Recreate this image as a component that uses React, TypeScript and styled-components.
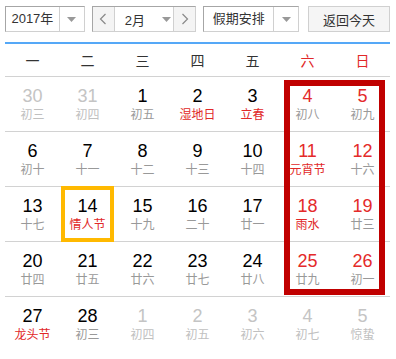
import React from "react";
import styled, { createGlobalStyle } from "styled-components";

const Global = createGlobalStyle`
  html, body { margin: 0; padding: 0; background: #fff; }
  body { font-family: "Liberation Sans", "Noto Sans CJK SC", sans-serif; }
`;

const Page = styled.div`
  padding: 6px 0 0 5px;
  width: 385px;
`;

const Toolbar = styled.div`
  display: flex;
  height: 26px;
  font-family: "Liberation Sans", "Noto Sans CJK SC", sans-serif;
  font-size: 13px;
  color: #333;
`;

const Select = styled.div<{ $w: number; $ml?: number }>`
  display: flex;
  box-sizing: border-box;
  width: ${(p) => p.$w}px;
  margin-left: ${(p) => p.$ml ?? 0}px;
  height: 26px;
  border: 1px solid;
  border-color: #a6a6a6 #d0d0d0 #d0d0d0 #a6a6a6;
  background: #fff;
`;

const SelectText = styled.div`
  flex: 1;
  display: flex;
  align-items: center;
  justify-content: center;
  line-height: 24px;
`;

const Caret = styled.div`
  width: 24px;
  border-left: 1px solid #d0d0d0;
  display: flex;
  align-items: center;
  justify-content: center;
`;

const NavBtn = styled.div<{ $side: "l" | "r" }>`
  width: 21px;
  background: #f4f4f4;
  ${(p) => (p.$side === "l" ? "border-right" : "border-left")}: 1px solid #d0d0d0;
  display: flex;
  align-items: center;
  justify-content: center;
`;

const MonthText = styled.div`
  flex: 1;
  display: flex;
  align-items: center;
  padding-left: 10px;
  gap: 17px;
`;

const TodayBtn = styled.div`
  box-sizing: border-box;
  width: 82px;
  margin-left: 9px;
  height: 26px;
  border: 1px solid #d0d0d0;
  background: #f5f5f5;
  display: flex;
  align-items: center;
  justify-content: center;
`;

const Calendar = styled.div`
  margin-top: 10px;
  border-top: 2px solid #55a8f7;
  width: 385px;
`;

const Head = styled.div`
  display: grid;
  grid-template-columns: repeat(7, 55px);
  height: 32px;
  border-bottom: 1px solid #d2d2d2;
  font-family: "Noto Sans CJK SC", sans-serif;
  font-size: 14px;
`;

const HeadCell = styled.div<{ $weekend?: boolean }>`
  display: flex;
  align-items: center;
  justify-content: center;
  color: ${(p) => (p.$weekend ? "#e12828" : "#333")};
`;

const Body = styled.div`
  position: relative;
`;

const Row = styled.div<{ $last?: boolean }>`
  display: grid;
  grid-template-columns: repeat(7, 55px);
  height: 54px;
  border-bottom: ${(p) => (p.$last ? "none" : "1px solid #d2d2d2")};
`;

const Cell = styled.div`
  position: relative;
  display: flex;
  flex-direction: column;
  align-items: center;
  justify-content: center;
`;

const Num = styled.div<{ $tone: "n" | "w" | "o" }>`
  font-family: "Liberation Sans", Arial, sans-serif;
  font-size: 18px;
  line-height: 20px;
  color: ${(p) => (p.$tone === "n" ? "#000" : p.$tone === "w" ? "#e42a2a" : "#c4c4c4")};
`;

const Lunar = styled.div<{ $tone: "n" | "f" | "o" }>`
  font-family: "Noto Sans CJK SC", sans-serif;
  font-size: 12px;
  line-height: 16px;
  color: ${(p) => (p.$tone === "n" ? "#999" : p.$tone === "f" ? "#e12828" : "#c0c0c0")};
`;

const Selected = styled.div`
  position: absolute;
  left: 1px;
  top: -1px;
  width: 53px;
  height: 56px;
  box-sizing: border-box;
  border: 4px solid #ffb900;
  pointer-events: none;
`;

const WeekendMark = styled.div`
  position: absolute;
  left: 279px;
  top: 3px;
  width: 101px;
  height: 215px;
  box-sizing: border-box;
  border: 6px solid #c00000;
  pointer-events: none;
`;

const DownCaret = () => (
  <svg width="9" height="5" viewBox="0 0 9 5">
    <path d="M0 0h9L4.5 5z" fill="#999" />
  </svg>
);

const Chevron = ({ dir }: { dir: "l" | "r" }) => (
  <svg width="8" height="12" viewBox="0 0 8 12">
    <polyline
      points={dir === "l" ? "6.5,1 1.5,6 6.5,11" : "1.5,1 6.5,6 1.5,11"}
      fill="none"
      stroke="#888"
      strokeWidth="1.2"
    />
  </svg>
);

type Day = { d: number; l: string; o?: boolean; f?: boolean; sel?: boolean };

const rows: Day[][] = [
  [
    { d: 30, l: "初三", o: true },
    { d: 31, l: "初四", o: true },
    { d: 1, l: "初五" },
    { d: 2, l: "湿地日", f: true },
    { d: 3, l: "立春", f: true },
    { d: 4, l: "初八" },
    { d: 5, l: "初九" },
  ],
  [
    { d: 6, l: "初十" },
    { d: 7, l: "十一" },
    { d: 8, l: "十二" },
    { d: 9, l: "十三" },
    { d: 10, l: "十四" },
    { d: 11, l: "元宵节", f: true },
    { d: 12, l: "十六" },
  ],
  [
    { d: 13, l: "十七" },
    { d: 14, l: "情人节", f: true, sel: true },
    { d: 15, l: "十九" },
    { d: 16, l: "二十" },
    { d: 17, l: "廿一" },
    { d: 18, l: "雨水", f: true },
    { d: 19, l: "廿三" },
  ],
  [
    { d: 20, l: "廿四" },
    { d: 21, l: "廿五" },
    { d: 22, l: "廿六" },
    { d: 23, l: "廿七" },
    { d: 24, l: "廿八" },
    { d: 25, l: "廿九" },
    { d: 26, l: "初一" },
  ],
  [
    { d: 27, l: "龙头节", f: true },
    { d: 28, l: "初三" },
    { d: 1, l: "初四", o: true },
    { d: 2, l: "初五", o: true },
    { d: 3, l: "初六", o: true },
    { d: 4, l: "初七", o: true },
    { d: 5, l: "惊蛰", o: true },
  ],
];

const heads = ["一", "二", "三", "四", "五", "六", "日"];

export default function App() {
  return (
    <Page>
      <Global />
      <Toolbar>
        <Select $w={80}>
          <SelectText>2017年</SelectText>
          <Caret>
            <DownCaret />
          </Caret>
        </Select>
        <Select $w={105} $ml={7}>
          <NavBtn $side="l">
            <Chevron dir="l" />
          </NavBtn>
          <MonthText>
            <span>2月</span>
            <DownCaret />
          </MonthText>
          <NavBtn $side="r">
            <Chevron dir="r" />
          </NavBtn>
        </Select>
        <Select $w={96} $ml={7}>
          <SelectText>假期安排</SelectText>
          <Caret>
            <DownCaret />
          </Caret>
        </Select>
        <TodayBtn>返回今天</TodayBtn>
      </Toolbar>
      <Calendar>
        <Head>
          {heads.map((h, i) => (
            <HeadCell key={h} $weekend={i >= 5}>
              {h}
            </HeadCell>
          ))}
        </Head>
        <Body>
          {rows.map((r, ri) => (
            <Row key={ri} $last={ri === rows.length - 1}>
              {r.map((c, ci) => (
                <Cell key={ci}>
                  <Num $tone={c.o ? "o" : ci >= 5 ? "w" : "n"}>{c.d}</Num>
                  <Lunar $tone={c.o ? "o" : c.f ? "f" : "n"}>{c.l}</Lunar>
                  {c.sel && <Selected />}
                </Cell>
              ))}
            </Row>
          ))}
          <WeekendMark />
        </Body>
      </Calendar>
    </Page>
  );
}
